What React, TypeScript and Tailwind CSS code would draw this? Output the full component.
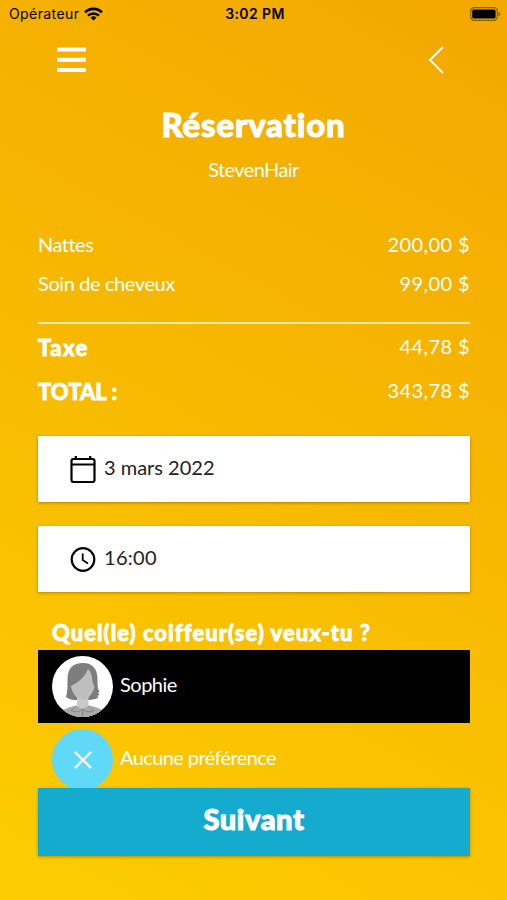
import React from 'react';

const services = [
  { name: 'Nattes', price: '200,00 $', nameSpacing: 'tracking-[-0.5px]' },
  { name: 'Soin de cheveux', price: '99,00 $', nameSpacing: 'tracking-[-0.4px]' },
];

const totals = [
  { label: 'Taxe', amount: '44,78 $', labelSpacing: 'tracking-[1.4px]' },
  { label: 'TOTAL :', amount: '343,78 $', labelSpacing: 'tracking-[0px]' },
];

const StatusBar: React.FC = () => (
  <div className="grid grid-cols-3 items-center h-7 pb-px pl-[9px] pr-[6px] font-['Inter','Liberation_Sans',sans-serif] text-black">
    <div className="flex items-center gap-[5px]">
      <span className="text-[14px] tracking-[0.4px]">Opérateur</span>
      <svg width="19" height="14" viewBox="0 0 19 14" fill="none" stroke="#000" strokeWidth="2.6">
        <path d="M1 5.4a12 12 0 0 1 17 0" />
        <path d="M4 8.7a7.8 7.8 0 0 1 11 0" />
        <path d="M9.5 13.6 6.5 10.7a4.3 4.3 0 0 1 6 0z" fill="#000" stroke="none" />
      </svg>
    </div>
    <span className="text-center text-[14px] tracking-[0.4px] font-semibold">3:02 PM</span>
    <svg className="justify-self-end" width="31" height="14" viewBox="0 0 31 14">
      <rect x="0.7" y="0.7" width="26.6" height="12.6" rx="3.6" fill="none" stroke="#000" strokeOpacity="0.45" strokeWidth="1.2" />
      <rect x="2.2" y="2.4" width="23.4" height="9.2" rx="1.6" />
      <path d="M28.6 4.7c2.1.8 2.1 3.8 0 4.6z" fillOpacity="0.45" />
    </svg>
  </div>
);

const Avatar: React.FC = () => (
  <svg width="61" height="61" viewBox="0 0 61 61">
    <defs>
      <clipPath id="avatar">
        <circle cx="30.5" cy="30.5" r="30.5" />
      </clipPath>
    </defs>
    <g clipPath="url(#avatar)">
      <rect width="61" height="61" fill="#fff" />
      <path d="M15.500 24C15.500 12 21 7 31 7c9.500 0 14.500 6 14.500 16 0 6 0 10 2 13l-1.500.8 1.500 2.200-2 .7.500 2.300c-4 1.500-7 2-11 2H25c-4 0-8-.5-11-3 1.500-5 1.500-9 1.500-17z" fill="#7d7d7d" />
      <path d="M25 38h11.500v11l12 4c3 1.500 4 4 4 9H9c0-5 1-7.500 4-9l12-4z" fill="#cacaca" />
      <path d="M11.500 54c4-2.500 8.500-3.500 13-4l6 3 6-3c5 .5 9.500 1.500 13.500 4.500v8H10z" fill="#a9a9a9" />
      <path d="M19 30c8-4 14-9 17-17 3 3 4 6 4.500 13l2 5c-1.500 6-6.500 13-11.500 13S20 38 19 30z" fill="#bebebe" />
      <path d="M24 50c-2 2-3 3.500-5 4.500 4 2 8 1.500 11.500-1.500 3.500 3 7.500 3.500 11.500 1.500-2-1-3-2.500-5-4.500M30.500 53v8" fill="none" stroke="#777" strokeWidth="0.7" />
    </g>
  </svg>
);

export default function App() {
  return (
    <main className="w-[507px] h-[900px] overflow-hidden bg-[linear-gradient(208deg,#f3a800_0%,#f7b900_48%,#fdcd00_100%)] font-['Lato','Open_Sans',sans-serif] text-white">
      <StatusBar />

      <header className="flex justify-between items-center h-16 pl-[57px] pr-[63px]">
        <svg width="29" height="26" viewBox="0 0 29 26" fill="#fff">
          <rect y="0.5" width="29" height="4" />
          <rect y="10.800" width="29" height="4" />
          <rect y="21" width="29" height="4" />
        </svg>
        <svg width="16" height="28" viewBox="0 0 16 28" fill="none" stroke="#fff" strokeWidth="2">
          <path d="M15 1 2 14l13 13" />
        </svg>
      </header>

      <div className="text-center h-[136px] pt-[11px]">
        <h1 className="text-[33px] leading-[42px] font-black tracking-[0.8px] [-webkit-text-stroke:1px_white]">Réservation</h1>
        <p className="mt-[12px] text-[20px] leading-6 tracking-[-0.6px]">StevenHair</p>
      </div>

      <div className="pl-[38px] pr-[37px]">
        <ul className="h-[96px] border-b-2 border-white/70">
          {services.map((service) => (
            <li key={service.name} className="flex justify-between h-[39px] pt-[4px] text-[20px] leading-6">
              <span className={service.nameSpacing}>{service.name}</span>
              <span className="tracking-[0.4px]">{service.price}</span>
            </li>
          ))}
        </ul>

        <ul className="h-[112px] pt-[6px]">
          {totals.map((total) => (
            <li key={total.label} className="flex justify-between h-11 pt-[5px] text-[20px] leading-6">
              <span className={`pt-px text-[22px] font-black [-webkit-text-stroke:0.8px_white] ${total.labelSpacing}`}>{total.label}</span>
              <span className="-mt-px tracking-[0.4px]">{total.amount}</span>
            </li>
          ))}
        </ul>

        {/* Date and time fields */}
        <div className="space-y-6 text-[20px] text-[#222]">
          <div className="flex items-center h-[66px] pl-[30px] bg-white shadow-[0_1px_3px_rgba(0,0,0,0.3)]">
            <svg width="29" height="29" viewBox="0 0 29 29" fill="none" stroke="#000" strokeWidth="2.2">
              <rect x="3.500" y="4" width="23" height="23" rx="2" />
              <path d="M3.500 9.500h23M7.800 1v3M22.200 1v3" />
            </svg>
            <span className="pl-[7px] pb-[5px]">3 mars 2022</span>
          </div>
          <div className="flex items-center h-[66px] pl-[30px] bg-white shadow-[0_1px_3px_rgba(0,0,0,0.3)]">
            <svg width="29" height="29" viewBox="0 0 29 29" fill="none" stroke="#000" strokeWidth="2.2">
              <circle cx="15" cy="14.500" r="11.300" />
              <path d="M14.700 8.500v6.500l5.300 3.500" strokeWidth="1.8" />
            </svg>
            <span className="pl-[7px] pb-[5px] tracking-[0.3px]">16:00</span>
          </div>
        </div>

        <h2 className="h-[58px] pl-[14px] pt-[29px] text-[22px] leading-6 font-black tracking-[1px] [-webkit-text-stroke:0.8px_white]">Quel(le) coiffeur(se) veux-tu ?</h2>

        <div className="flex items-center gap-[7px] h-[73px] pl-[14px] bg-black text-[20px]">
          <Avatar />
          <span className="pb-[6px] tracking-[-0.5px]">Sophie</span>
        </div>
        <div className="flex items-start gap-[7px] h-[65px] pl-[14px] pt-[6px] overflow-hidden text-[20px]">
          <div className="flex items-center justify-center shrink-0 w-[61px] h-[61px] rounded-full bg-[#60d8f8]">
            <svg width="18" height="18" viewBox="0 0 18 18" stroke="#fff" strokeWidth="2.4">
              <path d="M1 1l16 16M17 1 1 17" />
            </svg>
          </div>
          <span className="leading-6 pt-[16px] tracking-[-0.6px]">Aucune préférence</span>
        </div>

        <button className="block w-full h-[68px] pb-[7px] bg-[#15abcf] text-[29px] font-black tracking-[0.6px] [-webkit-text-stroke:1px_white] shadow-[0_1px_3px_rgba(0,0,0,0.3)]">
          Suivant
        </button>
      </div>
    </main>
  );
}
